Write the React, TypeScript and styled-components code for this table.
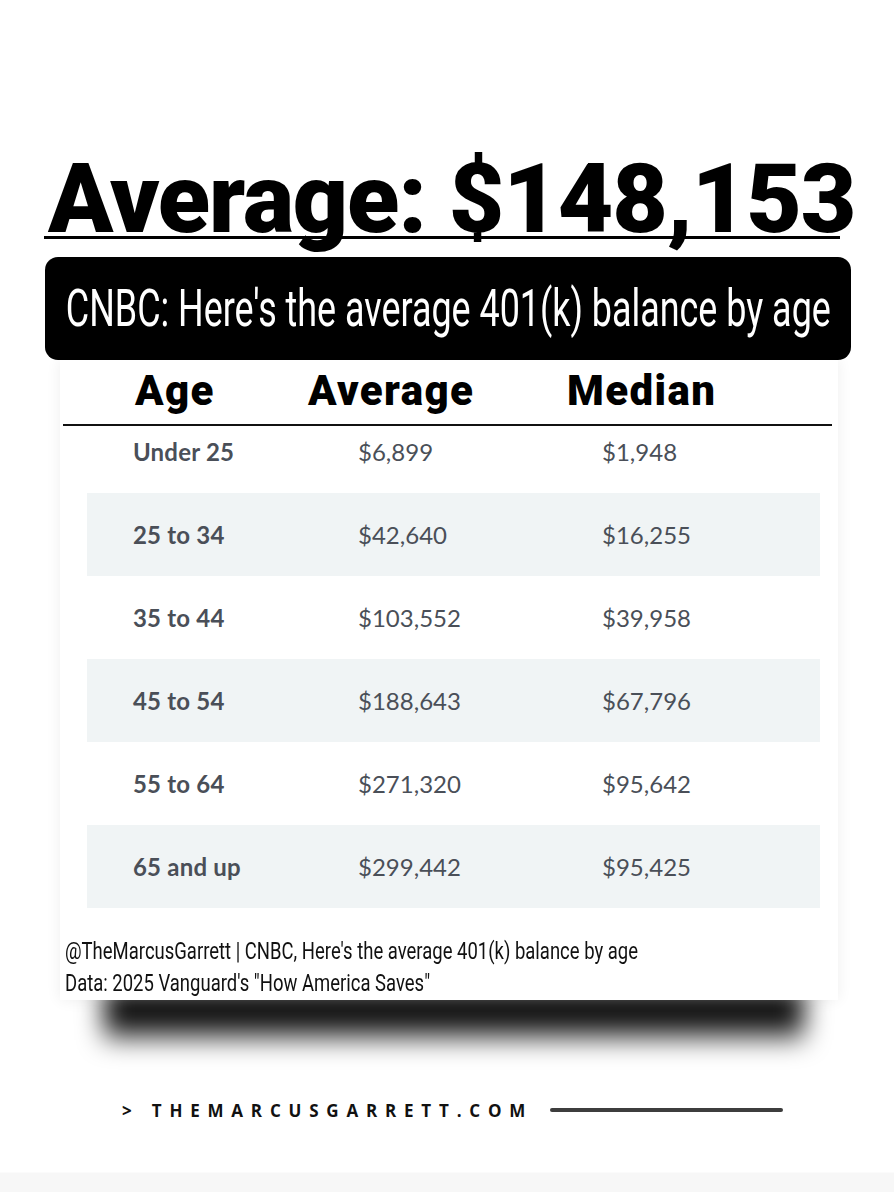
import React from "react";
import styled, { createGlobalStyle } from "styled-components";

const GlobalStyle = createGlobalStyle`
  html, body { margin: 0; padding: 0; background: #ffffff; }
  * { box-sizing: border-box; }
`;

const Page = styled.div`
  width: 894px;
  height: 1192px;
  display: flex;
  flex-direction: column;
  background: #ffffff;
  overflow: hidden;
  font-family: Roboto, "Liberation Sans", sans-serif;
`;

const Title = styled.h1`
  position: relative;
  margin: 149px 0 0 44px;
  padding-left: 4px;
  width: 796px;
  height: 100px;
  font-family: Roboto, "Liberation Sans", sans-serif;
  font-weight: 900;
  font-size: 96px;
  line-height: 100px;
  letter-spacing: -1.1px;
  color: #000;
  white-space: nowrap;
  &::after {
    content: "";
    position: absolute;
    left: 0;
    top: 87px;
    width: 796px;
    height: 3px;
    background: #000;
  }
`;

const Banner = styled.div`
  position: relative;
  z-index: 3;
  margin: 8px 0 0 45px;
  width: 806px;
  height: 103px;
  border-radius: 13px;
  background: #000;
  display: flex;
  align-items: center;
  justify-content: center;
`;

const Condensed = styled.span<{ $scale: number; $origin?: string }>`
  display: inline-block;
  white-space: nowrap;
  transform: scaleX(${(p) => p.$scale});
  transform-origin: ${(p) => p.$origin ?? "center"};
`;

const BannerText = styled(Condensed)`
  font-family: Roboto, "Liberation Sans", sans-serif;
  font-weight: 400;
  font-size: 52px;
  line-height: 1;
  color: #fff;
`;

const Card = styled.div`
  position: relative;
  z-index: 2;
  margin-left: 60px;
  width: 778px;
  height: 640px;
  background: #fff;
  box-shadow: 0 0 14px rgba(0, 0, 0, 0.07);
  display: flex;
  flex-direction: column;
`;

const HeaderRow = styled.div`
  display: grid;
  grid-template-columns: 173px 259px 1fr;
  padding: 10px 0 0 75px;
  height: 52px;
`;

const HeaderCell = styled.div`
  font-family: Roboto, "Liberation Sans", sans-serif;
  font-weight: 900;
  font-size: 42px;
  line-height: 42px;
  color: #000;
  letter-spacing: 1.4px;
`;

const HeaderRule = styled.div`
  margin: 12px 6px 0 3px;
  height: 2px;
  background: #111;
`;

const Rows = styled.div`
  display: flex;
  flex-direction: column;
  margin: 0 18px 0 27px;
`;

const Row = styled.div<{ $shaded?: boolean; $first?: boolean }>`
  display: grid;
  grid-template-columns: 225px 244px 1fr;
  align-items: center;
  padding-left: 46px;
  height: ${(p) => (p.$first ? "67px" : "83px")};
  padding-bottom: ${(p) => (p.$first ? "17px" : "0")};
  background: ${(p) => (p.$shaded ? "#f0f4f5" : "transparent")};
`;

const AgeCell = styled.div`
  font-family: Lato, "Open Sans", sans-serif;
  font-weight: 700;
  font-size: 24px;
  letter-spacing: 0.2px;
  color: #4a4f58;
`;

const ValueCell = styled.div`
  font-family: Lato, "Open Sans", sans-serif;
  font-weight: 400;
  font-size: 24px;
  color: #4a4f58;
`;

const Notes = styled.div`
  display: flex;
  flex-direction: column;
  margin-top: 27px;
  padding-left: 5px;
`;

const NoteLine = styled(Condensed)`
  font-family: Roboto, "Liberation Sans", sans-serif;
  font-weight: 400;
  font-size: 24px;
  line-height: 32px;
  color: #111;
`;

const DropShadow = styled.div`
  position: relative;
  z-index: 1;
  margin: -10px 0 0 104px;
  width: 700px;
  height: 50px;
  background: linear-gradient(#000 0%, #000 45%, rgba(0, 0, 0, 0.55) 100%);
  filter: blur(13px);
`;

const SiteRow = styled.div`
  display: flex;
  align-items: center;
  margin: 58px 0 0 122px;
  height: 24px;
  gap: 17px;
`;

const SiteText = styled.div`
  font-family: "Open Sans", "Liberation Sans", sans-serif;
  font-weight: 700;
  font-size: 17px;
  letter-spacing: 7.8px;
  color: #111;
  white-space: nowrap;
`;

const SiteLine = styled.div`
  width: 233px;
  height: 4px;
  background: #3d3d3d;
  border-radius: 2px;
`;

const BottomStrip = styled.div`
  margin-top: auto;
  height: 20px;
  background: #f7f7f7;
  border-top: 1px solid #fbfbfb;
`;

const data = [
  ["Under 25", "$6,899", "$1,948"],
  ["25 to 34", "$42,640", "$16,255"],
  ["35 to 44", "$103,552", "$39,958"],
  ["45 to 54", "$188,643", "$67,796"],
  ["55 to 64", "$271,320", "$95,642"],
  ["65 and up", "$299,442", "$95,425"],
];

export default function App() {
  return (
    <Page>
      <GlobalStyle />
      <Title>Average: $148,153</Title>
      <Banner>
        <BannerText $scale={0.69}>CNBC: Here's the average 401(k) balance by age</BannerText>
      </Banner>
      <Card>
        <HeaderRow>
          <HeaderCell>Age</HeaderCell>
          <HeaderCell>Average</HeaderCell>
          <HeaderCell>Median</HeaderCell>
        </HeaderRow>
        <HeaderRule />
        <Rows>
          {data.map((r, i) => (
            <Row key={r[0]} $shaded={i % 2 === 1} $first={i === 0}>
              <AgeCell>{r[0]}</AgeCell>
              <ValueCell>{r[1]}</ValueCell>
              <ValueCell>{r[2]}</ValueCell>
            </Row>
          ))}
        </Rows>
        <Notes>
          <div>
            <NoteLine $scale={0.77} $origin="left">
              @TheMarcusGarrett | CNBC, Here's the average 401(k) balance by age
            </NoteLine>
          </div>
          <div>
            <NoteLine $scale={0.77} $origin="left">
              Data: 2025 Vanguard's "How America Saves"
            </NoteLine>
          </div>
        </Notes>
      </Card>
      <DropShadow />
      <SiteRow>
        <SiteText>&gt; THEMARCUSGARRETT.COM</SiteText>
        <SiteLine />
      </SiteRow>
      <BottomStrip />
    </Page>
  );
}
